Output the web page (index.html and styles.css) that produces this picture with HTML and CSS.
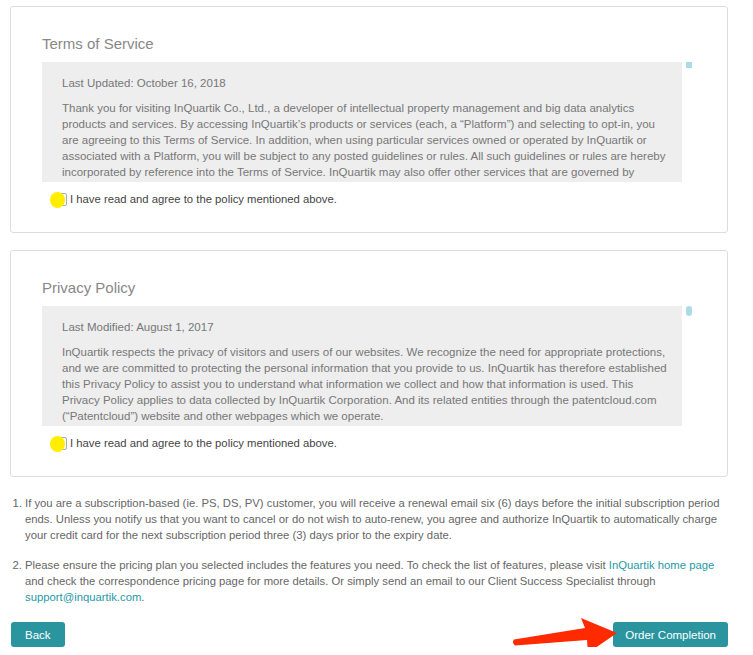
FILE: index.html
```html
<!DOCTYPE html>
<html lang="en">
<head>
    <meta charset="UTF-8">
    <title>Order confirmation</title>
    <link rel="stylesheet" href="styles.css">
</head>
<body>
	<div class="page">
		<div class="policy-card">
			<div class="policy-title">Terms of Service</div>
			<div class="policy-scroll">
				<div class="policy-box">
					<p>Last Updated: October 16, 2018</p>
					<p>Thank you for visiting InQuartik Co., Ltd., a developer of intellectual property management and big data analytics
					products and services. By accessing InQuartik’s products or services (each, a “Platform”) and selecting to opt-in, you
					are agreeing to this Terms of Service. In addition, when using particular services owned or operated by InQuartik or
					associated with a Platform, you will be subject to any posted guidelines or rules. All such guidelines or rules are hereby
					incorporated by reference into the Terms of Service. InQuartik may also offer other services that are governed by
					different terms of service, in which case those terms will be presented to you when you use those services.</p>
				</div>
				<span class="scroll-thumb thumb-small"></span>
			</div>
			<label class="agree">
				<span class="check"><span class="highlight"></span></span>
				<span>I have read and agree to the policy mentioned above.</span>
			</label>
		</div>

		<div class="policy-card">
			<div class="policy-title">Privacy Policy</div>
			<div class="policy-scroll">
				<div class="policy-box">
					<p>Last Modified: August 1, 2017</p>
					<p>InQuartik respects the privacy of visitors and users of our websites. We recognize the need for appropriate protections,
					and we are committed to protecting the personal information that you provide to us. InQuartik has therefore established
					this Privacy Policy to assist you to understand what information we collect and how that information is used. This
					Privacy Policy applies to data collected by InQuartik Corporation. And its related entities through the patentcloud.com
					(“Patentcloud”) website and other webpages which we operate.</p>
					<p>By using our websites, you consent to the practices described in this Privacy Policy.</p>
				</div>
				<span class="scroll-thumb thumb-tall"></span>
			</div>
			<label class="agree">
				<span class="check"><span class="highlight"></span></span>
				<span>I have read and agree to the policy mentioned above.</span>
			</label>
		</div>

		<ol class="notes">
			<li>If you are a subscription-based (ie. PS, DS, PV) customer, you will receive a renewal email six (6) days before the initial subscription period
			ends. Unless you notify us that you want to cancel or do not wish to auto-renew, you agree and authorize InQuartik to automatically charge
			your credit card for the next subscription period three (3) days prior to the expiry date.</li>
			<li>Please ensure the pricing plan you selected includes the features you need. To check the list of features, please visit <a href="#">InQuartik home page</a>
			and check the correspondence pricing page for more details. Or simply send an email to our Client Success Specialist through
			<a href="#">support@inquartik.com</a>.</li>
		</ol>

		<div class="actions">
			<button class="action back">Back</button>
			<button class="action">Order Completion</button>
			<svg class="pointer" width="120" height="40" viewBox="0 0 120 40">
				<path d="M12 21.5 L83 10 L79 0 L115 15 L86 35 L85 22 L13 27.5 Q9.5 24.5 12 21.5 Z" fill="#ff2a00"/>
			</svg>
		</div>
	</div>
</body>
</html>
```

FILE: styles.css
```css
		body {
			margin: 0;
			font-family: "Liberation Sans", Arial, sans-serif;
			font-size: 11.5px;
			color: #666;
			background: #fff;
		}

		.page {
			width: 718px;
			margin-left: 10px;
			padding-top: 6px;
		}

		.policy-card {
			border: 1px solid #ddd;
			border-radius: 3px;
			padding: 28px 45px 26px 31px;
			margin-bottom: 17px;
		}

		.policy-title {
			font-size: 15px;
			color: #888;
			height: 18px;
			margin-bottom: 9px;
		}

		.policy-scroll {
			position: relative;
			width: 640px;
		}

		.policy-box {
			background: #eee;
			height: 120px;
			overflow: hidden;
			padding: 13px 14px 0 20px;
			box-sizing: border-box;
			color: #777;
			line-height: 16px;
		}

		.policy-box p {
			margin: 0 0 9px 0;
		}

		.scroll-thumb {
			position: absolute;
			left: 644px;
			top: 0;
			width: 6px;
			background: #acdbe8;
		}

		.thumb-small {
			height: 6px;
		}

		.thumb-tall {
			height: 10px;
			border-radius: 3px;
		}

		.agree {
			display: flex;
			align-items: center;
			gap: 3px;
			margin-top: 10px;
			color: #444;
			font-size: 11.3px;
			line-height: 14px;
		}

		.check {
			position: relative;
			display: inline-block;
			width: 11px;
			height: 11px;
			margin-left: 12px;
			border: 1px solid #aaa;
			border-radius: 2px;
			background: #fff;
		}

		.highlight {
			position: absolute;
			left: -5px;
			top: -2px;
			width: 15px;
			height: 16px;
			border-radius: 50%;
			background: #ffee00;
		}

		.notes {
			width: 724px;
			margin: 18px 0 0 0;
			padding-left: 15px;
			box-sizing: border-box;
			line-height: 16px;
			font-size: 11.3px;
			color: #666;
		}

		.notes li {
			margin-bottom: 14px;
		}

		.notes a {
			color: #1f9aa6;
			text-decoration: none;
		}

		.actions {
			position: relative;
			display: flex;
			justify-content: space-between;
			margin-top: 17px;
		}

		.action {
			background: #2b959f;
			color: #fff;
			border: none;
			border-radius: 3px;
			height: 25px;
			padding: 0 12px;
			font-family: "Liberation Sans", Arial, sans-serif;
			font-size: 11.5px;
		}

		.back {
			margin-left: 1px;
			padding: 0 14px;
		}

		.pointer {
			position: absolute;
			left: 492px;
			top: -4px;
			overflow: visible;
		}
```
